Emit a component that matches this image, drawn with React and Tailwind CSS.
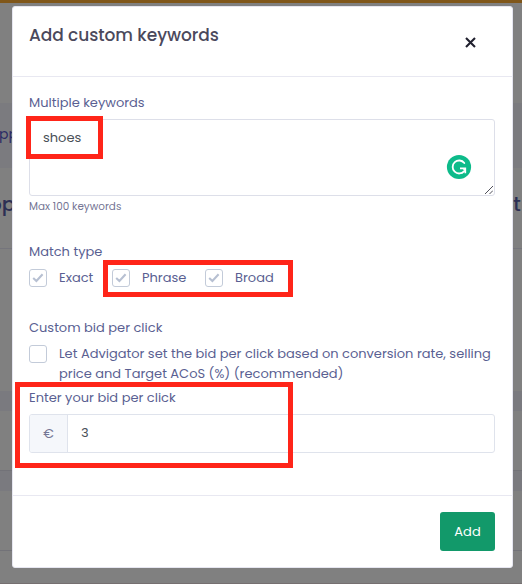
import React from "react";

function Backdrop() {
  return (
    <div className="flex h-[584px] w-full flex-col overflow-hidden bg-[#808080]">
      <div className="h-[3px] bg-[#80571a]" />
      <div className="h-[100px]" />
      <div className="h-[65px] bg-[#7b7b7f] pt-[20px]">
        <span className="ml-[-1px] block text-[14px] leading-[22px] text-[#2c2c66]">pp</span>
      </div>
      <div className="flex h-[81px] justify-between border-b border-[#75757c] pt-[22px] text-[20px] leading-[28px] font-medium text-[#2c2f54]">
        <span className="ml-[-11px]">op</span>
        <span className="mr-px tracking-[0.4px]">ot</span>
      </div>
      <div className="h-[142px]" />
      <div className="h-[20px] bg-[#7a7a7f]" />
      <div className="h-[60px] border-b border-[#727278]" />
      <div className="h-[20px] bg-[#7a7a7f]" />
      <div className="h-[60px] border-b border-[#727278]" />
      <div className="h-[32px]" />
      <div className="h-px bg-[#756f70]" />
    </div>
  );
}

function Checkbox({ checked }) {
  return (
    <span className="flex size-[18px] shrink-0 items-center justify-center rounded-[3px] border border-[#c3cbd9] bg-white">
      {checked && (
        <svg width="12" height="10" viewBox="0 0 12 10" fill="none">
          <path d="M1.2 5 4.4 8 10.6 1.3" stroke="#b7c0d2" strokeWidth="2.1" />
        </svg>
      )}
    </span>
  );
}

export default function App() {
  return (
    <div className="relative h-[584px] w-[522px] overflow-hidden font-[Poppins,Inter,sans-serif] text-[13px] text-[#5a5f92]">
      <Backdrop />
      <div className="absolute top-[6px] left-[12px] flex h-[562px] w-[501px] flex-col rounded-[3px] border border-[#e6e6f0] bg-white">
        <header className="flex h-[70px] shrink-0 items-start justify-between border-b border-[#e8e8f1] pr-[36px] pl-[16px]">
          <h1 className="mt-[16px] text-[17px] leading-[24px] font-medium tracking-[-0.05px] text-[#4b495c]">Add custom keywords</h1>
          <svg className="mt-[30px]" width="11" height="11" viewBox="0 0 11 11" fill="none">
            <path d="M1 1 10 10M10 1 1 10" stroke="#20202e" strokeWidth="2.1" />
          </svg>
        </header>
        <main className="flex h-[419px] shrink-0 flex-col border-b border-[#e8e8f1] px-[16px] pt-[16px]">
          <label className="h-[26px] leading-[20px]">Multiple keywords</label>
          <div className="flex h-[77px] w-[466px] shrink-0 justify-between rounded-[3px] border border-[#dddfe9] pl-[13px] text-[#495057]">
            <span className="mt-[8px] leading-[20px]">shoes</span>
            <div className="flex">
              <svg className="mt-[34px]" width="26" height="26" viewBox="0 0 26 26" fill="none">
                <circle cx="13" cy="13" r="12.1" fill="#0dbb8a" />
                <path d="M18.3 9A6.5 6.5 0 1 0 18.2 17.1" stroke="white" strokeWidth="1.8" strokeLinecap="round" />
                <path d="M14 14.3H19.3V19.3" stroke="white" strokeWidth="1.7" />
                <path d="M15.8 14H20V18.2Z" fill="white" />
              </svg>
              <svg className="mt-[66px] mr-[1px] ml-[13px]" width="8" height="8" viewBox="0 0 8 8" fill="none">
                <path d="M0 8 8 0M4.5 8 8 4.5" stroke="#50505a" />
              </svg>
            </div>
          </div>
          <p className="mt-[3px] h-[43px] text-[10.4px] leading-[16px] tracking-[0.02px] text-[#747594]">Max 100 keywords</p>
          <div className="h-[26px] leading-[20px]">Match type</div>
          <div className="flex h-[50px] items-start leading-[20px]">
            <div className="flex w-[83px] items-center gap-[12px]"><Checkbox checked /><span>Exact</span></div>
            <div className="flex w-[93px] items-center gap-[12px]"><Checkbox checked /><span>Phrase</span></div>
            <div className="flex items-center gap-[12px]"><Checkbox checked /><span>Broad</span></div>
          </div>
          <div className="h-[26px] leading-[20px]">Custom bid per click</div>
          <div className="flex h-[44px] items-start gap-[12px] leading-[20px]">
            <span className="mt-[1px]"><Checkbox /></span>
            <p className="w-[440px]">
              Let Advigator set the bid per click based on conversion rate, selling price and Target ACoS (%) (recommended)
            </p>
          </div>
          <label className="h-[26px] leading-[20px]">Enter your bid per click</label>
          <div className="flex h-[39px] w-[466px] shrink-0 overflow-hidden rounded-[3px] border border-[#dfe3ec]">
            <span className="flex w-[38px] items-center justify-center border-r border-[#dfe3ec] bg-[#f5f7fb] text-[#747594]">€</span>
            <span className="pt-[8px] pl-[13px] leading-[20px] text-[#495057]">3</span>
          </div>
        </main>
        <footer className="flex justify-end pt-[16px] pr-[17px]">
          <button className="h-[39px] w-[55px] rounded-[3px] bg-[#12996a] text-[13px] text-white">Add</button>
        </footer>
      </div>
      <div className="absolute top-[116px] left-[26px] h-[43px] w-[77px] border-5 border-[#ff2519]" />
      <div className="absolute top-[260px] left-[103px] h-[37px] w-[190px] border-5 border-[#ff2519]" />
      <div className="absolute top-[382px] left-[15px] h-[86px] w-[278px] border-5 border-[#ff2519]" />
    </div>
  );
}
